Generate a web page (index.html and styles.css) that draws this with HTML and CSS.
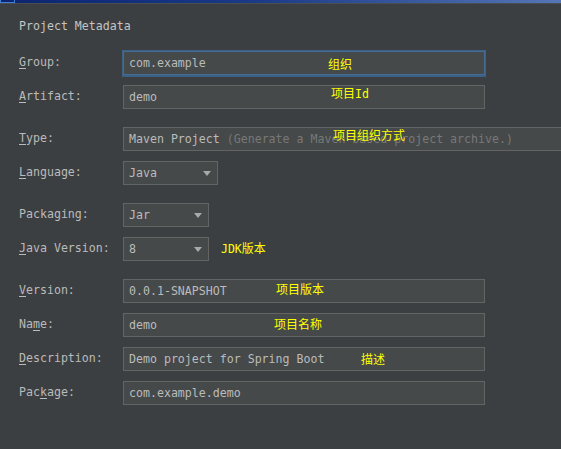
FILE: index.html
```html
<!DOCTYPE html>
<html lang="zh-CN">
<head>
<meta charset="utf-8">
<title>Project Metadata</title>
<link rel="stylesheet" href="styles.css">
</head>
<body>
<div class="titlebar"><span class="tb-box"></span></div>
<main class="panel">
  <h1 class="title">Project Metadata</h1>
  <div class="form">
    <div class="section">
      <div class="row"><label class="lbl"><u>G</u>roup:</label><div class="field focused">com.example</div></div>
      <div class="row"><label class="lbl"><u>A</u>rtifact:</label><div class="field">demo</div></div>
    </div>
    <div class="section">
      <div class="row"><label class="lbl"><u>T</u>ype:</label><div class="field wide">Maven Project <span class="hint">(Generate a Maven-based project archive.)</span></div></div>
      <div class="row"><label class="lbl"><u>L</u>anguage:</label><div class="field combo lang">Java<span class="arrow"></span></div></div>
    </div>
    <div class="section">
      <div class="row"><label class="lbl">Packaging:</label><div class="field combo small">Jar<span class="arrow"></span></div></div>
      <div class="row"><label class="lbl"><u>J</u>ava Version:</label><div class="field combo small">8<span class="arrow"></span></div></div>
    </div>
    <div class="section">
      <div class="row"><label class="lbl"><u>V</u>ersion:</label><div class="field">0.0.1-SNAPSHOT</div></div>
      <div class="row"><label class="lbl">Na<u>m</u>e:</label><div class="field">demo</div></div>
      <div class="row"><label class="lbl"><u>D</u>escription:</label><div class="field">Demo project for Spring Boot</div></div>
      <div class="row"><label class="lbl">Pac<u>k</u>age:</label><div class="field">com.example.demo</div></div>
    </div>
  </div>
  <span class="note n-group">组织</span>
  <span class="note n-artifact">项目<span class="lat">Id</span></span>
  <span class="note n-type">项目组织方式</span>
  <span class="note n-java"><span class="lat">JDK</span>版本</span>
  <span class="note n-version">项目版本</span>
  <span class="note n-name">项目名称</span>
  <span class="note n-desc">描述</span>
</main>
</body>
</html>
```
FILE: styles.css
```css
html, body {
  margin: 0;
  padding: 0;
  width: 561px;
  height: 449px;
  overflow: hidden;
  background: #3c3f41;
}
body {
  font-family: "DejaVu Sans Mono", "Liberation Mono", monospace;
  font-size: 11.6px;
  color: #bbbbbb;
}
.titlebar {
  height: 3px;
  background: linear-gradient(to right, #0b2470 0%, #1a3a86 45%, #5575b5 100%);
  border-bottom: 1px solid #4a4e52;
  display: flex;
}
.tb-box {
  width: 13px;
  height: 2px;
  border: 1px solid #3f7fd6;
  border-top: none;
}
.panel {
  position: relative;
  padding: 15px 0 0 19px;
  width: 542px;
  overflow: hidden;
}
.title {
  margin: 0;
  font-size: 11.6px;
  font-weight: normal;
  line-height: 14px;
  color: #c4c4c4;
}
.form {
  margin-top: 18px;
  display: flex;
  flex-direction: column;
  gap: 18px;
}
.section {
  display: flex;
  flex-direction: column;
  gap: 10px;
}
.row {
  display: flex;
  align-items: center;
  height: 24px;
}
.lbl {
  width: 104px;
  flex: none;
  line-height: 14px;
  margin-top: -2px;
}
.lbl u {
  text-decoration-thickness: 1px;
  text-underline-offset: 2px;
}
.field {
  box-sizing: border-box;
  width: 362px;
  height: 24px;
  flex: none;
  background: #45494a;
  border: 1px solid #646464;
  padding: 0 5px;
  display: flex;
  align-items: center;
  white-space: pre;
  line-height: 14px;
  position: relative;
}
.field.focused {
  border-color: #456a93;
  box-shadow: 0 0 0 1px #3d6185, 0 1px 0 1px #3d6185;
}
.field.wide {
  width: 450px;
  margin-right: -20px;
}
.hint {
  color: #787878;
}
.field.combo.lang { width: 95px; }
.field.combo.small { width: 86px; }
.arrow {
  position: absolute;
  right: 6px;
  top: 9px;
  width: 0;
  height: 0;
  border-left: 4.5px solid transparent;
  border-right: 4.5px solid transparent;
  border-top: 5px solid #a9a9a9;
}
.note {
  position: absolute;
  font-family: "Noto Sans CJK SC", "DejaVu Sans", sans-serif;
  font-size: 12px;
  line-height: 14px;
  color: #ffff00;
  white-space: nowrap;
}
.note .lat {
  font-family: "DejaVu Sans Mono", monospace;
  font-size: 11.5px;
}
.n-group { left: 328px; top: 53px; }
.n-artifact { left: 331px; top: 82px; }
.n-type { left: 333px; top: 124px; }
.n-java { left: 221px; top: 237px; }
.n-version { left: 276px; top: 278px; }
.n-name { left: 274px; top: 313px; }
.n-desc { left: 361px; top: 348px; }
```
